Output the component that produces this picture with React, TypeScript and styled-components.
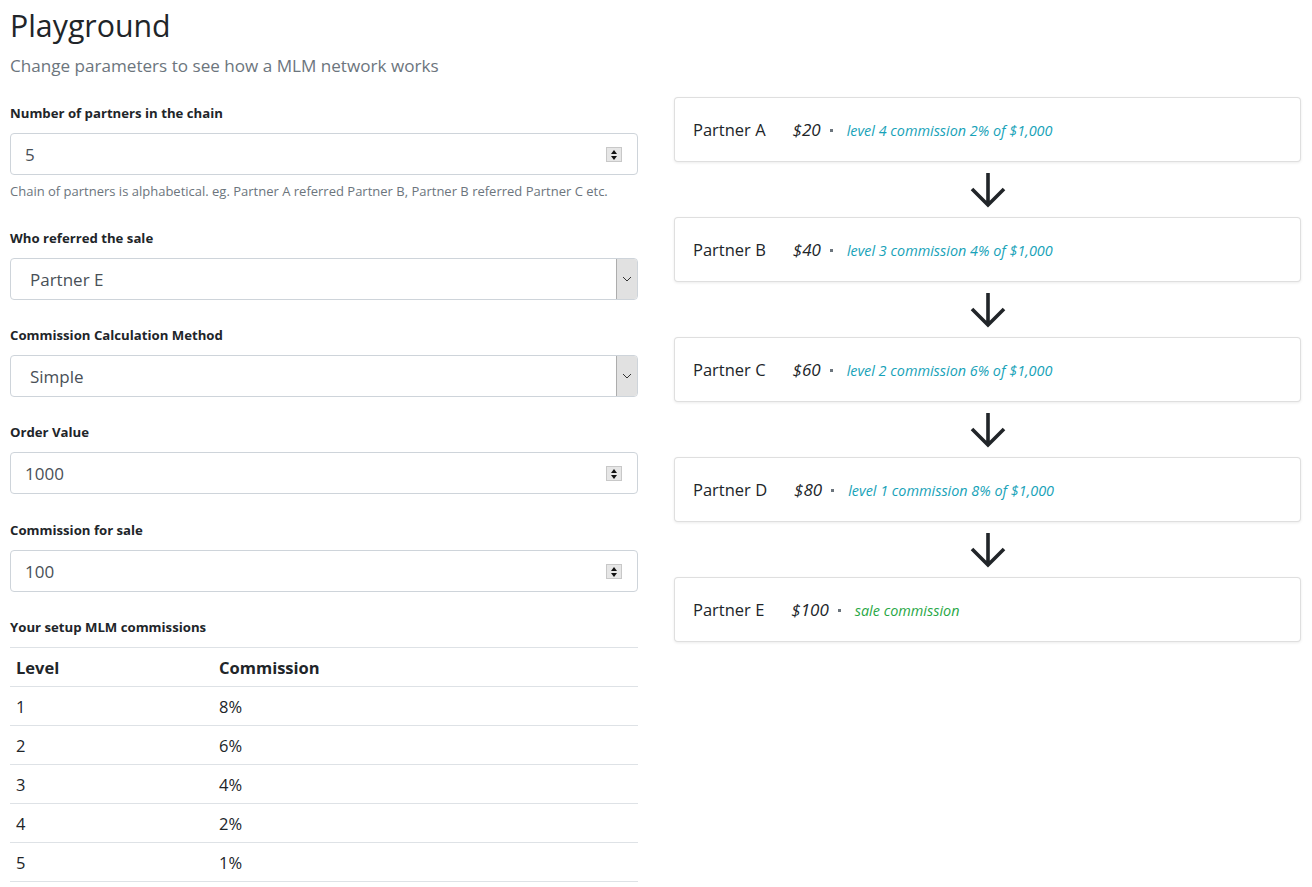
import React from "react";
import styled, { createGlobalStyle } from "styled-components";

const Global = createGlobalStyle`
  html, body { margin: 0; padding: 0; background: #fff; }
  body { font-family: "Open Sans", "Noto Sans", "Liberation Sans", sans-serif; color: #212529; }
  * { box-sizing: border-box; }
`;

const Page = styled.div`
  display: grid;
  grid-template-columns: 628px 627px;
  column-gap: 36px;
  padding: 0 10px;
`;

const Header = styled.div`
  grid-column: 1 / span 2;
  padding-top: 6px;
`;

const Title = styled.h1`
  margin: 0;
  font-size: 30.3px;
  font-weight: 400;
  line-height: 1.3;
`;

const Subtitle = styled.p`
  margin: 9px 0 0;
  font-size: 17.1px;
  color: #6c757d;
  line-height: 1.4;
`;

const Left = styled.div`
  display: flex;
  flex-direction: column;
  padding-top: 25px;
`;

const Group = styled.div<{ $mb?: number }>`
  display: flex;
  flex-direction: column;
  margin-bottom: ${(p) => p.$mb ?? 25}px;
`;

const Label = styled.label`
  font-size: 13.2px;
  font-weight: 700;
  line-height: 20px;
  margin-bottom: 10px;
`;

const Field = styled.div`
  position: relative;
  height: 42px;
  border: 1px solid #ced4da;
  border-radius: 4px;
  display: flex;
  align-items: center;
  padding-left: 14px;
  font-size: 17px;
  color: #495057;
  background: #fff;
`;

const SelectField = styled(Field)`
  padding-left: 19px;
  overflow: hidden;
`;

const Spinner = styled.div`
  position: absolute;
  right: 15px;
  top: 13px;
  width: 16px;
  height: 15px;
  background: #e6e6e6;
  border: 1px solid #c8c8c8;
  display: flex;
  flex-direction: column;
  align-items: center;
  justify-content: space-around;
`;

const Tri = styled.div<{ $up?: boolean }>`
  width: 0;
  height: 0;
  border-left: 3.5px solid transparent;
  border-right: 3.5px solid transparent;
  ${(p) => (p.$up ? "border-bottom: 4px solid #111;" : "border-top: 4px solid #111;")}
`;

const SelectBtn = styled.div`
  position: absolute;
  right: 0;
  top: 0;
  bottom: 0;
  width: 21px;
  background: #e1e1e1;
  border-left: 1px solid #adadad;
  display: flex;
  align-items: center;
  justify-content: center;
`;

const Help = styled.small`
  margin-top: 7px;
  font-size: 13px;
  color: #6c757d;
  line-height: 1.4;
`;

const TableTitle = styled.div`
  font-size: 13.2px;
  font-weight: 700;
  line-height: 20px;
  margin-bottom: 10px;
`;

const Table = styled.table`
  width: 100%;
  border-collapse: collapse;
  table-layout: fixed;
  font-size: 16.5px;
`;

const Col = styled.col<{ $w?: number }>`
  width: ${(p) => (p.$w ? `${p.$w}px` : "auto")};
`;

const Th = styled.th`
  text-align: left;
  font-weight: 700;
  padding: 0 6px;
  height: 39px;
  border-top: 1px solid #dee2e6;
  border-bottom: 1px solid #dee2e6;
`;

const Td = styled.td`
  padding: 0 6px;
  height: 39px;
  border-bottom: 1px solid #dee2e6;
`;

const Right = styled.div`
  display: flex;
  flex-direction: column;
  align-items: stretch;
  padding-top: 19px;
`;

const Card = styled.div`
  height: 65px;
  border: 1px solid rgba(0, 0, 0, 0.125);
  border-radius: 4px;
  box-shadow: 0 1px 3px rgba(0, 0, 0, 0.08);
  display: flex;
  align-items: center;
  padding-left: 18px;
  background: #fff;
`;

const Name = styled.span`
  font-size: 16.5px;
  margin-right: 27px;
`;

const Amount = styled.span`
  font-size: 17px;
  font-style: italic;
`;

const Dot = styled.span`
  width: 3px;
  height: 3px;
  background: #6c757d;
  margin: 2px 14px 0 9px;
`;

const Note = styled.span<{ $color: string }>`
  font-size: 14.4px;
  font-style: italic;
  color: ${(p) => p.$color};
  margin-top: 2px;
`;

const ArrowRow = styled.div`
  height: 55px;
  display: flex;
  align-items: center;
  justify-content: center;
`;

const Spin = () => (
  <Spinner>
    <Tri $up />
    <Tri />
  </Spinner>
);

const Chevron = () => (
  <svg width="10" height="6" viewBox="0 0 10 6">
    <path d="M1 1 L5 5 L9 1" fill="none" stroke="#333" strokeWidth="1" />
  </svg>
);

const DownArrow = () => (
  <svg width="38" height="38" viewBox="0 0 38 38">
    <path d="M19 2 V33 M3 18 L19 34 L35 18" fill="none" stroke="#212529" strokeWidth="3.6" />
  </svg>
);

const partners = [
  { name: "Partner A", amt: "$20", note: "level 4 commission 2% of $1,000", color: "#17a2b8" },
  { name: "Partner B", amt: "$40", note: "level 3 commission 4% of $1,000", color: "#17a2b8" },
  { name: "Partner C", amt: "$60", note: "level 2 commission 6% of $1,000", color: "#17a2b8" },
  { name: "Partner D", amt: "$80", note: "level 1 commission 8% of $1,000", color: "#17a2b8" },
  { name: "Partner E", amt: "$100", note: "sale commission", color: "#28a745" },
];

const levels = [
  ["1", "8%"],
  ["2", "6%"],
  ["3", "4%"],
  ["4", "2%"],
  ["5", "1%"],
];

export default function App() {
  return (
    <>
      <Global />
      <Page>
        <Header>
          <Title>Playground</Title>
          <Subtitle>Change parameters to see how a MLM network works</Subtitle>
        </Header>
        <Left>
          <Group $mb={28}>
            <Label>Number of partners in the chain</Label>
            <Field>
              5
              <Spin />
            </Field>
            <Help>Chain of partners is alphabetical. eg. Partner A referred Partner B, Partner B referred Partner C etc.</Help>
          </Group>
          <Group>
            <Label>Who referred the sale</Label>
            <SelectField>
              Partner E
              <SelectBtn>
                <Chevron />
              </SelectBtn>
            </SelectField>
          </Group>
          <Group>
            <Label>Commission Calculation Method</Label>
            <SelectField>
              Simple
              <SelectBtn>
                <Chevron />
              </SelectBtn>
            </SelectField>
          </Group>
          <Group $mb={26}>
            <Label>Order Value</Label>
            <Field>
              1000
              <Spin />
            </Field>
          </Group>
          <Group>
            <Label>Commission for sale</Label>
            <Field>
              100
              <Spin />
            </Field>
          </Group>
          <TableTitle>Your setup MLM commissions</TableTitle>
          <Table>
            <colgroup>
              <Col $w={203} />
              <Col $w={209} />
              <Col />
            </colgroup>
            <thead>
              <tr>
                <Th>Level</Th>
                <Th>Commission</Th>
                <Th />
              </tr>
            </thead>
            <tbody>
              {levels.map(([l, c]) => (
                <tr key={l}>
                  <Td>{l}</Td>
                  <Td>{c}</Td>
                  <Td />
                </tr>
              ))}
            </tbody>
          </Table>
        </Left>
        <Right>
          {partners.map((p, i) => (
            <React.Fragment key={p.name}>
              {i > 0 && (
                <ArrowRow>
                  <DownArrow />
                </ArrowRow>
              )}
              <Card>
                <Name>{p.name}</Name>
                <Amount>{p.amt}</Amount>
                <Dot />
                <Note $color={p.color}>{p.note}</Note>
              </Card>
            </React.Fragment>
          ))}
        </Right>
      </Page>
    </>
  );
}
